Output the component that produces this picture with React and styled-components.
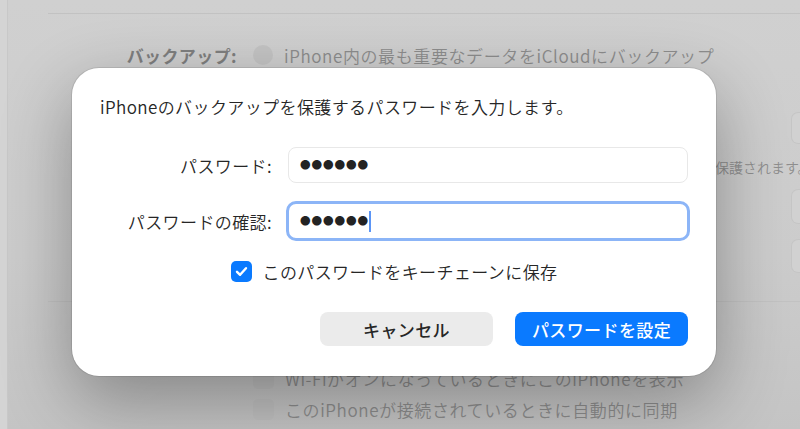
import React from "react";
import styled, { createGlobalStyle, css } from "styled-components";

const GlobalStyle = createGlobalStyle`
  html, body { margin: 0; padding: 0; }
  body {
    width: 800px; height: 429px; overflow: hidden; background: #cdcdcd;
    font-family: "Noto Sans CJK JP", "Noto Sans", sans-serif;
    -webkit-font-smoothing: antialiased;
  }
`;

const Screen = styled.div`
  position: relative;
  width: 800px;
  height: 429px;
  overflow: hidden;
  display: flex;
  background: linear-gradient(180deg, #d0d0d0 0%, #cccccc 60%, #c4c4c4 100%);
`;

const Strip = styled.div`
  width: 8px;
  flex: none;
  background: #d4d4d4;
  box-shadow: inset -1px 0 0 #c8c8c8;
`;

const Settings = styled.div`
  flex: none;
  width: 1040px;
  padding-left: 40px;
  display: flex;
  flex-direction: column;
  color: #8d8d8d;
  font-size: 17px;
  font-weight: 350;
  letter-spacing: 0.6px;
`;

const Rule = styled.div`
  flex: none;
  height: 1px;
  background: #c2c2c2;
  margin-top: ${(p) => p.$mt}px;
`;

const Row = styled.div`
  flex: none;
  display: grid;
  grid-template-columns: 189px 523px 190px;
  column-gap: 16px;
  align-items: center;
  height: ${(p) => p.$h}px;
  margin-top: ${(p) => p.$mt || 0}px;
`;

const RowLabel = styled.div`
  grid-column: 1;
  text-align: right;
  font-weight: 700;
  color: #7f7f7f;
  white-space: nowrap;
  letter-spacing: 0.4px;
`;

const Option = styled.div`
  grid-column: 2;
  display: flex;
  align-items: center;
  gap: 11px;
  white-space: nowrap;
`;

const Radio = styled.span`
  flex: none;
  width: 20px;
  height: 20px;
  border-radius: 50%;
  background: #c4c4c4;
`;

const Box = styled.span`
  flex: none;
  width: 21px;
  height: 21px;
  border-radius: 5px;
  background: #c1c1c1;
`;

const Note = styled.div`
  grid-column: 2 / span 2;
  font-size: 14px;
  letter-spacing: 0;
  white-space: nowrap;
  color: #8e8e8e;
`;

const SideButton = styled.div`
  grid-column: 3;
  align-self: stretch;
  border-radius: 6px;
  background: #d1d1d1;
  box-shadow: 0 0 0 1px #c5c5c5;
  font-size: 14px;
  display: flex;
  align-items: center;
  padding-left: 14px;
  white-space: nowrap;
`;

const Dialog = styled.div`
  position: absolute;
  left: 72px;
  top: 68px;
  width: 644px;
  box-sizing: border-box;
  padding: 28px 28px 30px;
  background: #ffffff;
  border-radius: 27px;
  box-shadow: 0 0 0 1px rgba(0, 0, 0, 0.09), 0 24px 70px rgba(0, 0, 0, 0.33);
  display: flex;
  flex-direction: column;
  color: #262626;
  font-size: 17px;
  font-weight: 350;
  letter-spacing: 0.4px;
`;

const Title = styled.div`
  line-height: 22px;
  white-space: nowrap;
`;

const Form = styled.div`
  margin-top: 29px;
  display: grid;
  grid-template-columns: 172px 1fr;
  column-gap: 16px;
  row-gap: 20px;
  grid-auto-rows: 36px;
  align-items: center;
`;

const Label = styled.div`
  text-align: right;
  white-space: nowrap;
`;

const Field = styled.div`
  height: 36px;
  box-sizing: border-box;
  border-radius: 8px;
  border: 1px solid #e8e8e8;
  display: flex;
  align-items: center;
  padding-left: 11px;
  ${(p) =>
    p.$focused &&
    css`
      border-color: transparent;
      outline: 3.5px solid #8cb5f7;
      outline-offset: -1.5px;
    `}
`;

const Mask = styled.span`
  font-family: "Noto Sans CJK JP", sans-serif;
  font-size: 10.6px;
  font-weight: 400;
  line-height: 1;
  color: #232323;
  letter-spacing: 0.9px;
`;

const Caret = styled.span`
  width: 2px;
  height: 21px;
  margin-left: 0;
  background: #5b95f6;
`;

const CheckRow = styled.label`
  margin-top: 22px;
  display: flex;
  justify-content: center;
  align-items: center;
  gap: 11px;
  height: 21px;
  white-space: nowrap;
`;

const CheckBox = styled.span`
  flex: none;
  width: 21px;
  height: 21px;
  border-radius: 5px;
  background: #0a7aff;
  display: flex;
  align-items: center;
  justify-content: center;
`;

const Buttons = styled.div`
  margin-top: 30px;
  display: flex;
  justify-content: flex-end;
  gap: 22px;
`;

const Button = styled.button`
  width: 173px;
  height: 34px;
  border: none;
  border-radius: 8px;
  font-family: inherit;
  font-size: 17px;
  font-weight: 500;
  letter-spacing: 0.4px;
  padding: 0;
  background: ${(p) => (p.$primary ? "#0a7aff" : "#ebebeb")};
  color: ${(p) => (p.$primary ? "#ffffff" : "#262626")};
`;

export default function App() {
  return (
    <>
      <GlobalStyle />
      <Screen>
        <Strip />
        <Settings>
          <Rule $mt={13} />
          <Row $h={28} $mt={27}>
            <RowLabel>バックアップ:</RowLabel>
            <Option>
              <Radio />
              iPhone内の最も重要なデータをiCloudにバックアップ
            </Option>
          </Row>
          <Row $h={28}>
            <Option>
              <Radio />
              iPhoneのすべてのデータをこのMacにバックアップ
            </Option>
          </Row>
          <Row $h={30} $mt={16}>
            <Option>
              <Box />
              ローカルのバックアップを暗号化
            </Option>
            <SideButton>パスワードを変更…</SideButton>
          </Row>
          <Row $h={24} $mt={12}>
            <Note>暗号化されたバックアップでは、パスワードと機密性の高い個人データが保護されます。</Note>
          </Row>
          <Row $h={33} $mt={11}>
            <Option>このMacへの最新のバックアップ: 今日 10:24</Option>
            <SideButton>バックアップを管理…</SideButton>
          </Row>
          <Row $h={32} $mt={17}>
            <SideButton>今すぐバックアップ</SideButton>
          </Row>
          <Rule $mt={29} />
          <Row $h={26} $mt={20}>
            <RowLabel>オプション:</RowLabel>
            <Option>
              <Box />
              SD形式のビデオを優先
            </Option>
          </Row>
          <Row $h={30} $mt={15}>
            <Option>
              <Box />
              Wi-FiがオンになっているときにこのiPhoneを表示
            </Option>
          </Row>
          <Row $h={30} $mt={1}>
            <Option>
              <Box />
              このiPhoneが接続されているときに自動的に同期
            </Option>
          </Row>
        </Settings>

        <Dialog>
          <Title>iPhoneのバックアップを保護するパスワードを入力します。</Title>
          <Form>
            <Label>パスワード:</Label>
            <Field>
              <Mask>●●●●●●</Mask>
            </Field>
            <Label>パスワードの確認:</Label>
            <Field $focused>
              <Mask>●●●●●●</Mask>
              <Caret />
            </Field>
          </Form>
          <CheckRow>
            <CheckBox>
              <svg width="15" height="15" viewBox="0 0 15 15">
                <path
                  d="M3 7.8 L6.1 10.8 L12 4.2"
                  fill="none"
                  stroke="#fff"
                  strokeWidth="2.4"
                  strokeLinecap="round"
                  strokeLinejoin="round"
                />
              </svg>
            </CheckBox>
            このパスワードをキーチェーンに保存
          </CheckRow>
          <Buttons>
            <Button>キャンセル</Button>
            <Button $primary>パスワードを設定</Button>
          </Buttons>
        </Dialog>
      </Screen>
    </>
  );
}
